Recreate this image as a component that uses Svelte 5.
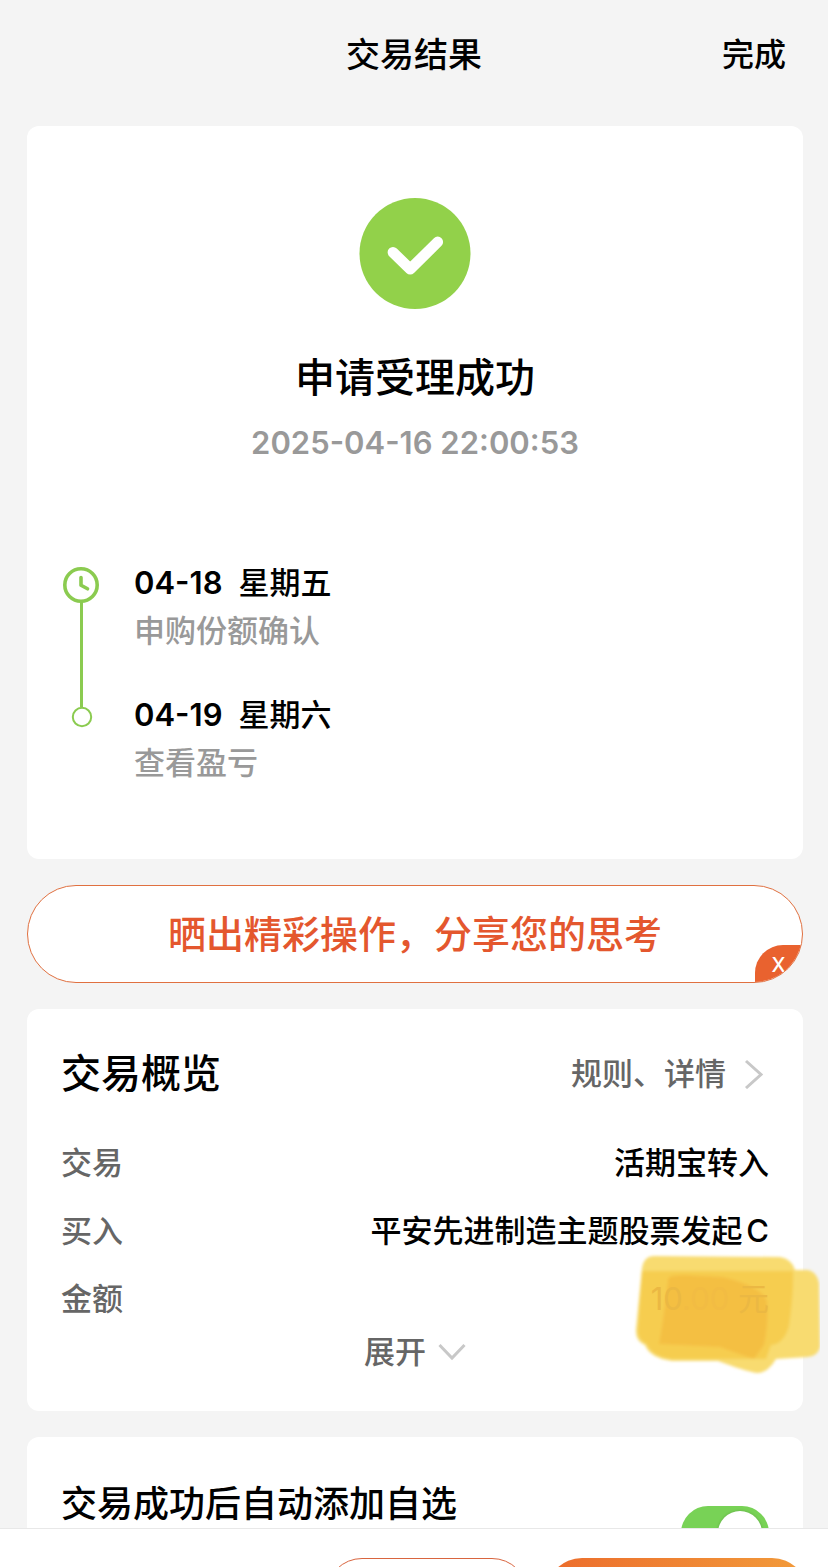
<script lang="ts">
  let expanded = $state(false);
  let shareVisible = $state(true);
  let autoAdd = $state(true);

  const steps = [
    { date: '04-18', day: '星期五', note: '申购份额确认' },
    { date: '04-19', day: '星期六', note: '查看盈亏' }
  ];
</script>

<div class="page">
  <header class="topbar">
    <h1>交易结果</h1>
    <button class="done" type="button">完成</button>
  </header>

  <main>
    <section class="card result">
      <svg class="tick" viewBox="0 0 112 112" aria-hidden="true">
        <circle cx="56" cy="55.5" r="55.5" fill="#92d14a" />
        <path d="M34 54.3 51.2 71.2 78.7 44" fill="none" stroke="#fff" stroke-width="10.8" stroke-linecap="round" stroke-linejoin="round" />
      </svg>
      <h2>申请受理成功</h2>
      <time>2025-04-16 22:00:53</time>

      <div class="timeline">
        <svg class="rail" viewBox="0 0 38 162" aria-hidden="true">
          <g fill="none" stroke="#8bcb50">
            <path d="M19.5 36V141" stroke-width="3" />
            <circle cx="19" cy="19" r="16.2" stroke-width="3.6" />
            <path d="M19 11.5V19.2L25.5 22.8" stroke-width="3.6" stroke-linecap="round" stroke-linejoin="round" />
            <circle cx="20" cy="151" r="9.2" stroke-width="2" />
          </g>
        </svg>
        <ol>
          {#each steps as step}
            <li>
              <strong><span class="date">{step.date}</span><span>{step.day}</span></strong>
              <p>{step.note}</p>
            </li>
          {/each}
        </ol>
      </div>
    </section>

    {#if shareVisible}
      <div class="share">
        <a href="#share">晒出精彩操作，分享您的思考</a>
        <button class="close" type="button" aria-label="关闭" onclick={() => (shareVisible = false)}>X</button>
      </div>
    {/if}

    <section class="card overview">
      <div class="heading">
        <h2>交易概览</h2>
        <a href="#rules">
          规则、详情
          <svg class="right" viewBox="0 0 20 30" aria-hidden="true">
            <path d="M2 2 17 15.500 2 29" fill="none" stroke="#c8c8c8" stroke-width="3" />
          </svg>
        </a>
      </div>
      <dl>
        <div><dt>交易</dt><dd>活期宝转入</dd></div>
        <div><dt>买入</dt><dd>平安先进制造主题股票发起C</dd></div>
        <div>
          <dt>金额</dt>
          <dd class="amount">
            <svg class="marker" viewBox="0 0 190 124" aria-hidden="true">
              <defs>
                <filter id="soft" x="-10%" y="-10%" width="120%" height="120%"><feGaussianBlur stdDeviation="1.6" /></filter>
              </defs>
              <g filter="url(#soft)">
                <path d="M24 3 150 4Q162 6 165 17L178 17Q187 19 189 30L190 94Q188 103 178 104L146 106Q138 120 127 120Q115 118 88 108L42 108Q20 105 15 92Q5 88 6 76L12 15Q14 3 24 3Z" fill="#f8db70" />
                <path d="M12 18 163 18Q164 38 159 73Q154 91 141 92L136 106 84 106 42 106Q21 103 17 91Q8 87 8 78Z" fill="#f6cd50" />
                <path d="M38 28Q36 22 54 22L93 24Q134 34 137 49Q139 68 134 92L124 106Q100 98 90 94L29 91Q33 70 38 28Z" fill="#f4bf43" />
              </g>
            </svg>
            <span class="sum">10<span class="cents">.00</span> 元</span>
          </dd>
        </div>
      </dl>
      <button class="expand" type="button" aria-expanded={expanded} onclick={() => (expanded = !expanded)}>
        展开
        <svg viewBox="0 0 28 18" aria-hidden="true">
          <path d="M1.500 2 14 15 26.500 2" fill="none" stroke="#c8c8c8" stroke-width="3" />
        </svg>
      </button>
    </section>

    <section class="card favourite">
      <label for="auto-add">交易成功后自动添加自选</label>
      <input id="auto-add" class="switch" type="checkbox" role="switch" bind:checked={autoAdd} />
    </section>
  </main>

  <footer>
    <button class="outline" type="button" aria-label="查看"></button>
    <button class="primary" type="button" aria-label="继续"></button>
  </footer>
</div>

<style>
  :global(body) {
    background: #f4f4f4;
  }

  .page {
    display: flex;
    flex-direction: column;
    height: 100vh;
    overflow: hidden;
    background: #f4f4f4;
    color: #000;
    font-family: Inter, 'Noto Sans CJK SC', sans-serif;
    font-size: 31px;
    font-weight: 500;
    line-height: 48px;
  }

  .page * {
    box-sizing: border-box;
  }

  h1, h2, p, ol, dl, dd {
    margin: 0;
    padding: 0;
    font-weight: 500;
  }

  button {
    padding: 0;
    border: 0;
    background: none;
    color: inherit;
    font: inherit;
    cursor: pointer;
  }

  a {
    color: inherit;
    text-decoration: none;
  }

  svg {
    display: block;
    flex: none;
  }

  .topbar {
    display: grid;
    grid-template-columns: 1fr auto 1fr;
    align-items: center;
    flex: none;
    height: 110px;
    padding: 0 42px;
  }

  h1 {
    grid-column: 2;
    font-size: 34px;
  }

  .done {
    justify-self: end;
    font-size: 32px;
  }

  main {
    display: flex;
    flex: 1;
    flex-direction: column;
    gap: 26px;
    min-height: 0;
    padding: 16px 25px 0 27px;
    overflow: hidden;
  }

  .card {
    flex: none;
    padding: 0 34px;
    border-radius: 12px;
    background: #fff;
  }

  .result {
    display: flex;
    flex-direction: column;
    align-items: center;
    padding: 72px 35px;
  }

  .tick {
    width: 112px;
    height: 112px;
  }

  h2 {
    font-size: 40px;
    line-height: 60px;
  }

  .result h2 {
    margin-top: 38px;
  }

  time {
    margin-top: 11px;
    color: #999;
    font-weight: 600;
  }

  .timeline {
    display: flex;
    gap: 34px;
    align-self: stretch;
    margin-top: 92px;
  }

  .rail {
    width: 38px;
    height: 162px;
    margin-top: 7px;
  }

  ol {
    display: flex;
    flex-direction: column;
    gap: 36px;
    list-style: none;
  }

  strong {
    display: flex;
    gap: 16px;
    font-weight: 500;
  }

  .date {
    font-weight: 600;
  }

  .timeline p {
    color: #999;
  }

  .share {
    position: relative;
    display: flex;
    flex: none;
    height: 98px;
    overflow: hidden;
    border: 1px solid #e07040;
    border-radius: 49px;
    background: #fff;
    color: #e4572e;
    font-size: 38px;
  }

  .share a {
    display: flex;
    flex: 1;
    align-items: center;
    justify-content: center;
  }

  .close {
    position: absolute;
    right: 0;
    bottom: 0;
    width: 47px;
    height: 37px;
    padding-top: 4px;
    border-radius: 28px 0 0 0;
    background: #e9622f;
    color: #fff;
    font-size: 20px;
    line-height: 33px;
  }

  .overview {
    display: flex;
    flex-direction: column;
    padding-top: 35px;
    padding-bottom: 35px;
  }

  .heading {
    display: flex;
    align-items: center;
    justify-content: space-between;
  }

  .heading a {
    display: flex;
    gap: 18px;
    align-items: center;
    color: #666;
  }

  .right {
    width: 20px;
    height: 30px;
    margin-right: 5px;
  }

  dl {
    display: flex;
    flex-direction: column;
    gap: 20px;
    margin-top: 35px;
  }

  dl div {
    display: flex;
    justify-content: space-between;
  }

  dd {
    text-autospace: normal;
  }

  dt,
  .expand {
    color: #666;
  }

  .amount {
    position: relative;
  }

  .marker {
    position: absolute;
    top: -22px;
    right: -51px;
    width: 190px;
    height: 124px;
  }

  .sum {
    position: relative;
    color: #ebb843;
    font-weight: 400;
  }

  .cents {
    color: #f2bc43;
  }

  .expand {
    display: flex;
    gap: 12px;
    align-items: center;
    align-self: center;
    margin-top: 5px;
  }

  .expand svg {
    width: 28px;
    height: 18px;
  }

  .favourite {
    display: flex;
    align-items: flex-start;
    justify-content: space-between;
    padding-top: 43px;
    padding-bottom: 42px;
    font-size: 36px;
  }

  .switch {
    position: relative;
    width: 88px;
    height: 54px;
    margin: 26px 0 0;
    border-radius: 27px;
    background: #ddd;
    appearance: none;
    cursor: pointer;
  }

  .switch::before {
    content: '';
    position: absolute;
    top: 5px;
    left: 5px;
    width: 44px;
    height: 44px;
    border-radius: 50%;
    background: #fff;
    box-shadow: 0 0 3px #0003;
  }

  .switch:checked {
    background: #78d256;
  }

  .switch:checked::before {
    left: 37px;
  }

  footer {
    display: flex;
    flex: none;
    gap: 18px;
    align-items: flex-start;
    justify-content: flex-end;
    height: 39px;
    padding: 29px 20px 0;
    overflow: hidden;
    border-top: 1px solid #e8e8e8;
    background: #fff;
  }

  footer button {
    flex: none;
    height: 72px;
    border-radius: 36px;
  }

  .outline {
    width: 202px;
    border: 1px solid #d9653f;
  }

  .primary {
    width: 262px;
    background: linear-gradient(90deg, #ec6c2c, #f29b3a);
  }
</style>
